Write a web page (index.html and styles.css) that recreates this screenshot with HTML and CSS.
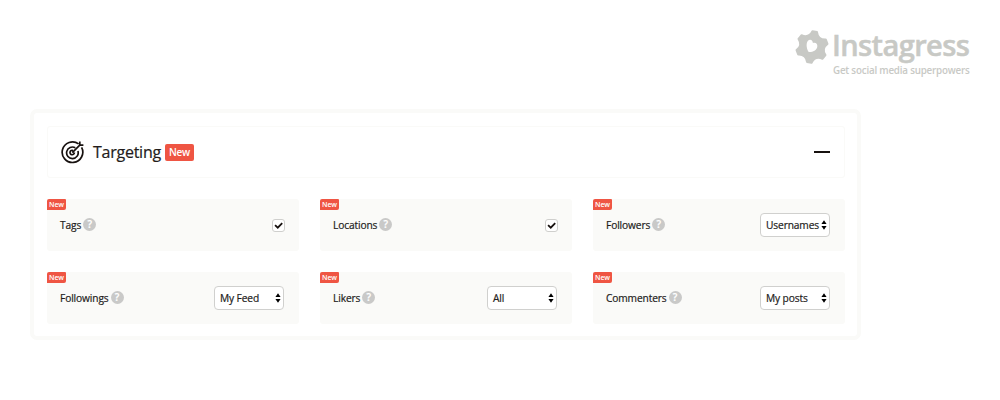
FILE: index.html
```html
<!DOCTYPE html>
<html lang="en">
<head>
  <meta charset="UTF-8" />
  <meta name="viewport" content="width=device-width, initial-scale=1.0" />
  <title>Instagress - Targeting</title>
  <link rel="stylesheet" href="styles.css">
</head>
<body>
  <svg class="sprite" width="0" height="0">
    <symbol id="arrows" viewBox="0 0 6 10">
      <path d="M3 0.3 5.6 4H0.4zM3 9.7 5.6 6H0.4z" />
    </symbol>
    <symbol id="check" viewBox="0 0 14 14">
      <path d="M3.3 6.6 6.2 9.4 11 4.4" fill="none" stroke="#17110f" stroke-width="1.9" />
    </symbol>
  </svg>

  <header class="brand">
    <svg class="brand-icon" viewBox="0 0 34 36" width="34" height="36">
      <path class="gear" transform="translate(17 18) rotate(10)" d="M-2.300-15.600H2.300Q4.600-8 12.300-9.800L14.700-5.700Q9.200 0 14.700 5.700L12.300 9.800Q4.600 8 2.300 15.600H-2.300Q-4.600 8-12.300 9.800L-14.700 5.700Q-9.200 0-14.700-5.700L-12.300-9.800Q-4.600-8-2.300-15.600Z" />
      <path class="heart" d="M13.700 23C11 19 10.700 11.800 14.300 10.900 16.500 10.400 17.800 12 17.900 14 20.300 13 22.800 14.600 22.300 17.700 21.600 21.300 17.600 23.300 13.700 23Z" />
    </svg>
    <div class="brand-text">
      <div class="brand-name">Instagress</div>
      <div class="brand-slogan">Get social media superpowers</div>
    </div>
  </header>

  <main class="panel">
    <div class="panel-header">
      <svg class="target" viewBox="0 0 24 24" width="24" height="24">
        <path d="M17.600 3.900A10.300 10.300 0 1 0 20.600 7.400M14.300 7.800A5.800 5.800 0 1 0 16.900 11M12 10.500A2.200 2.200 0 1 0 13.400 12.600M11.300 12.600 19 4.900M18.800 1.500V5.100H22.400" />
      </svg>
      <h1>Targeting</h1>
      <span class="badge">New</span>
      <span class="collapse"></span>
    </div>

    <div class="cards">
      <div class="card">
        <span class="tag">New</span>
        <label>Tags</label><span class="help">?</span>
        <span class="checkbox"><svg><use href="#check" /></svg></span>
      </div>
      <div class="card">
        <span class="tag">New</span>
        <label>Locations</label><span class="help">?</span>
        <span class="checkbox"><svg><use href="#check" /></svg></span>
      </div>
      <div class="card">
        <span class="tag">New</span>
        <label>Followers</label><span class="help">?</span>
        <span class="select">Usernames<svg><use href="#arrows" /></svg></span>
      </div>
      <div class="card">
        <span class="tag">New</span>
        <label>Followings</label><span class="help">?</span>
        <span class="select">My Feed<svg><use href="#arrows" /></svg></span>
      </div>
      <div class="card">
        <span class="tag">New</span>
        <label>Likers</label><span class="help">?</span>
        <span class="select">All<svg><use href="#arrows" /></svg></span>
      </div>
      <div class="card">
        <span class="tag">New</span>
        <label>Commenters</label><span class="help">?</span>
        <span class="select">My posts<svg><use href="#arrows" /></svg></span>
      </div>
    </div>
  </main>
</body>
</html>
```
FILE: styles.css
```css
:root {
  --logo: #c8c9c5;
  --red: #ef5543;
  --text: #231c1b;
  --card: #fafaf8;
}

* {
  box-sizing: border-box;
}

body {
  margin: 0;
  height: 400px;
  background: #fff;
  color: var(--text);
  font-family: "Open Sans", sans-serif;
  overflow: hidden;
}

.sprite {
  display: block;
}

.brand {
  display: flex;
  justify-content: flex-end;
  height: 109px;
  padding: 29px 30px 0 0;
  color: var(--logo);
}

.brand-icon {
  margin-right: 3px;
}

.gear {
  fill: var(--logo);
  stroke: var(--logo);
  stroke-width: 2;
  stroke-linejoin: round;
}

.heart {
  fill: #fff;
}

.brand-text {
  width: 138px;
  white-space: nowrap;
}

.brand-name {
  margin-top: -2px;
  font-size: 29px;
  font-weight: 600;
  line-height: 36px;
  letter-spacing: -0.6px;
  -webkit-text-stroke: 0.5px;
}

.brand-slogan {
  margin: 2px 0 0 1px;
  font-size: 9.8px;
  font-weight: 600;
  line-height: 12px;
  letter-spacing: -0.2px;
}

.panel {
  width: 831px;
  height: 231px;
  margin-left: 30px;
  padding: 13px 12px 13px 13px;
  border: 4px solid var(--card);
  border-radius: 7px;
}

.panel-header {
  display: flex;
  align-items: center;
  height: 52px;
  padding: 0 14px 0 13px;
  border: 1px solid var(--card);
  border-radius: 3px;
}

.target {
  margin-right: 8px;
  fill: none;
  stroke: #17110f;
  stroke-width: 1.7;
}

h1 {
  margin: 0 4px 0 0;
  font-size: 16px;
  font-weight: 400;
  letter-spacing: -0.25px;
  -webkit-text-stroke: 0.2px;
}

.badge {
  width: 29px;
  height: 17px;
  margin-top: 1px;
  border-radius: 2px;
  background: var(--red);
  color: #fff;
  font-size: 10px;
  font-weight: 600;
  line-height: 17px;
  letter-spacing: -0.3px;
  text-align: center;
}

.collapse {
  width: 16px;
  height: 2px;
  margin-left: auto;
  background: #17110f;
}

.cards {
  display: grid;
  grid-template-columns: repeat(3, 252px);
  gap: 21px;
  margin-top: 21px;
}

.card {
  position: relative;
  display: flex;
  align-items: center;
  height: 52px;
  padding: 0 14px 0 13px;
  border-radius: 3px;
  background: var(--card);
  font-size: 10.2px;
  letter-spacing: -0.12px;
  -webkit-text-stroke: 0.2px;
}

.tag {
  position: absolute;
  top: 0;
  left: 0;
  width: 19px;
  height: 11px;
  border-radius: 2px 1px 2px 0;
  background: var(--red);
  color: #fff;
  font-size: 7px;
  font-weight: 600;
  line-height: 11px;
  letter-spacing: -0.1px;
  text-align: center;
  -webkit-text-stroke: 0;
}

.help {
  width: 13px;
  height: 13px;
  margin: -1px 0 0 2px;
  border-radius: 50%;
  background: #c9c9c8;
  color: #fff;
  font-size: 10px;
  font-weight: 600;
  line-height: 13px;
  letter-spacing: 0;
  text-align: center;
}

.checkbox {
  width: 13px;
  height: 13px;
  margin-left: auto;
  border: 1px solid #cfcfcd;
  border-radius: 3px;
  background: #fff;
}

.checkbox svg {
  display: block;
  width: 13px;
  height: 13px;
  margin: -1px;
}

.select {
  display: flex;
  align-items: center;
  justify-content: space-between;
  width: 70px;
  height: 24px;
  margin: 0 1px 0 auto;
  padding: 0 2px 0 5px;
  border: 1px solid #d0d0ce;
  border-radius: 4px;
  background: #fff;
}

.select svg {
  width: 6px;
  height: 10px;
}
```
